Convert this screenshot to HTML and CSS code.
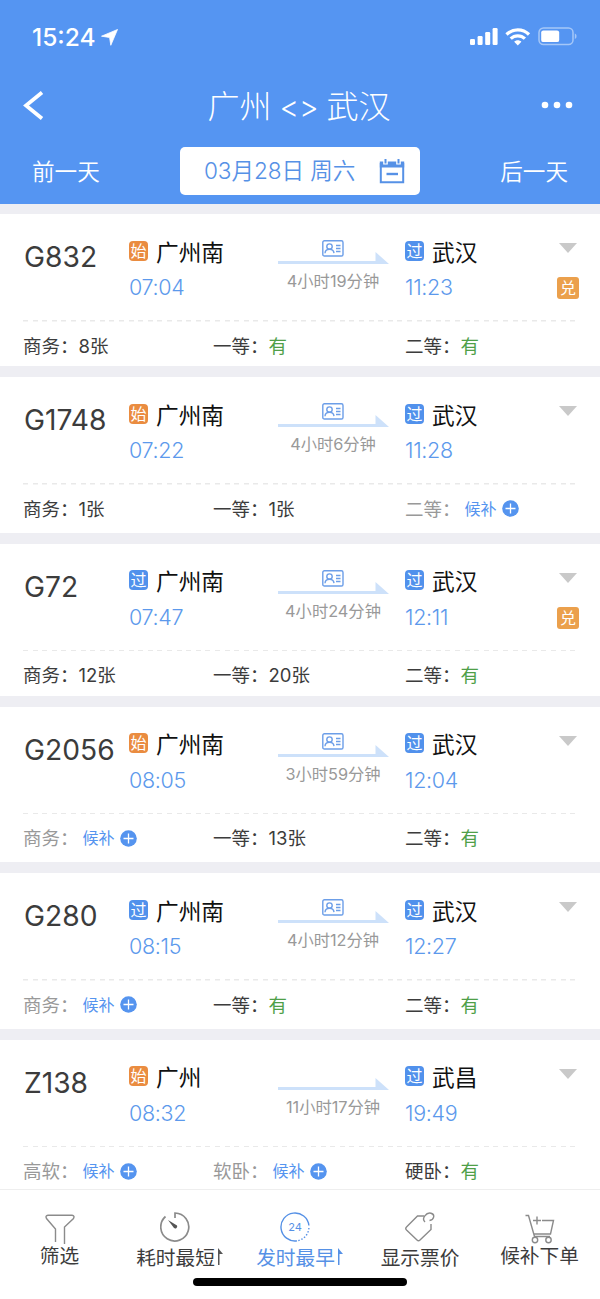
FILE: index.html
```html
<!DOCTYPE html>
<html lang="zh-CN">
<head>
<meta charset="utf-8">
<title>广州 - 武汉</title>
<link rel="stylesheet" href="styles.css">
</head>
<body>
<svg class="defs" width="0" height="0">
  <symbol id="idcard" viewBox="0 0 22 17"><rect x=".8" y=".8" width="20.2" height="15.2" rx="1.6"/><circle cx="7.5" cy="6.6" r="2.7"/><path d="M3 13.2c.2-2.6 2-3.9 4.5-3.9s4.200 1.300 4.500 3.900M14 5.500h4.500M14 8.500h4.500M14 11.500h4.500"/></symbol>
  <symbol id="plus" viewBox="0 0 17 17"><circle cx="8.500" cy="8.500" r="8.300" fill="#5594ef"/><path d="M8.500 3.500v10M3.500 8.500h10" stroke="#fff" stroke-width="1.300"/></symbol>
  <symbol id="track" viewBox="0 0 111 12"><path d="M0 9H97.500V0L111 12H0z" fill="#cde1fa"/></symbol>
  <symbol id="down" viewBox="0 0 18 10"><path d="M0 0h18L9 10z" fill="#c9c9c9"/></symbol>
</svg>
<div class="app">
  <header class="header">
    <div class="status">
      <span class="clock">15:24</span>
      <svg class="locate" width="17" height="17" viewBox="0 0 17 17"><path d="M16.500.500L9.800 16.300 8.600 8.500.500 7.200z" fill="#fff" stroke="#fff" stroke-width=".8" stroke-linejoin="round"/></svg>
      <svg class="signals" width="108" height="20" viewBox="0 0 108 20">
        <g fill="#fff"><rect x="0" y="12" width="5" height="6" rx="1.200"/><rect x="7.600" y="9" width="5" height="9" rx="1.200"/><rect x="15.200" y="5" width="5" height="13" rx="1.200"/><rect x="22.600" y="1" width="5" height="17" rx="1.200"/></g>
        <g fill="none" stroke="#fff" stroke-width="3.200"><path d="M36.500 7.500c6.300-6.200 16.300-6.200 22.500 0"/><path d="M40.700 11.700c4-3.900 10.200-3.900 14.200 0"/></g>
        <path d="M44.200 14.800c2-2 5.200-2 7.200 0l-3.600 3.600z" fill="#fff"/>
        <rect x="69" y="1" width="34" height="16.500" rx="4.500" fill="none" stroke="#a5c7f8" stroke-width="1.500"/>
        <rect x="71.200" y="3.400" width="18" height="11.700" rx="2.200" fill="#fff"/>
        <path d="M104.800 6.500c2.300.7 2.300 4.800 0 5.500z" fill="#a5c7f8"/>
      </svg>
    </div>
    <div class="title-bar">
      <svg width="21" height="29" viewBox="0 0 21 29"><path d="M19 1.500L3 14.500 19 27.500" fill="none" stroke="#fff" stroke-width="3.700"/></svg>
      <h1><span>广州</span><span class="swap">&lt;&gt;</span><span>武汉</span></h1>
      <svg width="32" height="8" viewBox="0 0 32 8" fill="#fff"><circle cx="4" cy="4" r="3.300"/><circle cx="16" cy="4" r="3.300"/><circle cx="28" cy="4" r="3.300"/></svg>
    </div>
    <div class="date-bar">
      <span>前一天</span>
      <div class="date"><span>03月28日 周六</span>
        <svg width="26" height="25" viewBox="0 0 26 25"><path d="M1.800 4v19.200h22.400V4" fill="none" stroke="#5691e6" stroke-width="2"/><path d="M.8 2.500h24.400v6H.8z" fill="#5691e6"/><path d="M6.500 0v5.500M19.500 0v5.500" stroke="#fff" stroke-width="4.600"/><path d="M6.500 0v4.500M19.500 0v4.500" stroke="#5691e6" stroke-width="2"/><path d="M7.500 15h11.500" stroke="#5691e6" stroke-width="2.400"/></svg>
      </div>
      <span>后一天</span>
    </div>
  </header>

  <main class="list">
    <article class="train">
      <div class="trip">
        <div class="number">G832</div>
        <div class="stop"><div class="station"><b class="tag start">始</b>广州南</div><time>07:04</time></div>
        <div class="duration"><svg class="id"><use href="#idcard"/></svg><svg class="track"><use href="#track"/></svg><span>4小时19分钟</span></div>
        <div class="stop"><div class="station"><b class="tag">过</b>武汉</div><time>11:23</time></div>
        <div class="side"><svg class="down"><use href="#down"/></svg><b class="redeem">兑</b></div>
      </div>
      <div class="seats"><div>商务：8张</div><div>一等：<em>有</em></div><div>二等：<em>有</em></div></div>
    </article>
    <article class="train waiting">
      <div class="trip">
        <div class="number">G1748</div>
        <div class="stop"><div class="station"><b class="tag start">始</b>广州南</div><time>07:22</time></div>
        <div class="duration"><svg class="id"><use href="#idcard"/></svg><svg class="track"><use href="#track"/></svg><span>4小时6分钟</span></div>
        <div class="stop"><div class="station"><b class="tag">过</b>武汉</div><time>11:28</time></div>
        <div class="side"><svg class="down"><use href="#down"/></svg></div>
      </div>
      <div class="seats"><div>商务：1张</div><div>一等：1张</div><div class="none">二等：<a>候补<svg><use href="#plus"/></svg></a></div></div>
    </article>
    <article class="train">
      <div class="trip">
        <div class="number">G72</div>
        <div class="stop"><div class="station"><b class="tag">过</b>广州南</div><time>07:47</time></div>
        <div class="duration"><svg class="id"><use href="#idcard"/></svg><svg class="track"><use href="#track"/></svg><span>4小时24分钟</span></div>
        <div class="stop"><div class="station"><b class="tag">过</b>武汉</div><time>12:11</time></div>
        <div class="side"><svg class="down"><use href="#down"/></svg><b class="redeem">兑</b></div>
      </div>
      <div class="seats"><div>商务：12张</div><div>一等：20张</div><div>二等：<em>有</em></div></div>
    </article>
    <article class="train waiting">
      <div class="trip">
        <div class="number">G2056</div>
        <div class="stop"><div class="station"><b class="tag start">始</b>广州南</div><time>08:05</time></div>
        <div class="duration"><svg class="id"><use href="#idcard"/></svg><svg class="track"><use href="#track"/></svg><span>3小时59分钟</span></div>
        <div class="stop"><div class="station"><b class="tag">过</b>武汉</div><time>12:04</time></div>
        <div class="side"><svg class="down"><use href="#down"/></svg></div>
      </div>
      <div class="seats"><div class="none">商务：<a>候补<svg><use href="#plus"/></svg></a></div><div>一等：13张</div><div>二等：<em>有</em></div></div>
    </article>
    <article class="train waiting">
      <div class="trip">
        <div class="number">G280</div>
        <div class="stop"><div class="station"><b class="tag">过</b>广州南</div><time>08:15</time></div>
        <div class="duration"><svg class="id"><use href="#idcard"/></svg><svg class="track"><use href="#track"/></svg><span>4小时12分钟</span></div>
        <div class="stop"><div class="station"><b class="tag">过</b>武汉</div><time>12:27</time></div>
        <div class="side"><svg class="down"><use href="#down"/></svg></div>
      </div>
      <div class="seats"><div class="none">商务：<a>候补<svg><use href="#plus"/></svg></a></div><div>一等：<em>有</em></div><div>二等：<em>有</em></div></div>
    </article>
    <article class="train waiting">
      <div class="trip">
        <div class="number">Z138</div>
        <div class="stop"><div class="station"><b class="tag start">始</b>广州</div><time>08:32</time></div>
        <div class="duration"><svg class="id"></svg><svg class="track"><use href="#track"/></svg><span>11小时17分钟</span></div>
        <div class="stop"><div class="station"><b class="tag">过</b>武昌</div><time>19:49</time></div>
        <div class="side"><svg class="down"><use href="#down"/></svg></div>
      </div>
      <div class="seats"><div class="none">高软：<a>候补<svg><use href="#plus"/></svg></a></div><div class="none">软卧：<a>候补<svg><use href="#plus"/></svg></a></div><div>硬卧：<em>有</em></div></div>
    </article>
  </main>

  <footer class="footer">
    <nav class="tabs">
      <div class="tab high">
        <svg width="30" height="30" viewBox="0 0 30 30"><path d="M10.500 28V15L1.500 4.500Q0 1.500 3 1.200H27Q30 1.500 28.500 4.500L19.500 13V30"/></svg>
        <span>筛选</span>
      </div>
      <div class="tab sorted">
        <svg width="30" height="30" viewBox="0 0 30 30"><path d="M15 6V1A14 14 0 1 1 5.500 4.500" stroke-width="1.700"/><path d="M8 8l9 5.500a2 2 0 0 1-3 2.500z" fill="#555" stroke="none"/></svg>
        <span>耗时最短<svg class="arrow" width="6" height="18" viewBox="0 0 6 18"><path d="M1 18V1l5 6H2.500v11z"/></svg></span>
      </div>
      <div class="tab sorted active">
        <svg width="30" height="30" viewBox="0 0 30 30"><path d="M17 28.850A14 14 0 1 1 28.900 13.500"/><path d="M28.900 16A14 14 0 0 1 17 28.850" stroke-dasharray="1.500 1.700"/><text x="15" y="19" text-anchor="middle">24</text></svg>
        <span>发时最早<svg class="arrow" width="6" height="18" viewBox="0 0 6 18"><path d="M1 18V1l5 6H2.500v11z"/></svg></span>
      </div>
      <div class="tab">
        <svg width="30" height="30" viewBox="0 0 30 30"><path d="M19 4H12.500L1.500 15Q0 16.500 1.500 18L12 28Q13.500 29.500 15 28L26 17.500V12"/><path d="M20 10C16 6.500 21.500 0 26 1.200C30.500 2.500 29 8 24.500 8.500"/></svg>
        <span>显示票价</span>
      </div>
      <div class="tab high">
        <svg width="30" height="30" viewBox="0 0 30 30"><path d="M.5 1.500H3.500L9.500 22.500H25M9 20H25.500L28.500 6.500H17M12 2.500v8M8 6.500h8"/><circle cx="10" cy="26" r="2.700"/><circle cx="23.500" cy="26" r="2.700"/></svg>
        <span>候补下单</span>
      </div>
    </nav>
    <div class="home"></div>
  </footer>
</div>
</body>
</html>
```
FILE: styles.css
```css
* { box-sizing: border-box; }
body { margin: 0; font-family: Inter, "Noto Sans CJK SC", sans-serif; color: #3c3c3c; }
svg { display: block; flex: none; }
.defs { position: absolute; }
.app { width: 600px; height: 1299px; display: flex; flex-direction: column; overflow: hidden; background: #eeeef3; }

.header { height: 203.500px; flex: none; background: #5595f2; color: #fff; }
.status { height: 74px; padding: 0 22px 0 32px; display: flex; align-items: center; }
.clock { font-size: 24.500px; font-weight: 500; width: 64px; letter-spacing: 0; }
.locate { margin-left: 5px; }
.signals { margin-left: auto; }
.title-bar { height: 62px; padding: 0 27px 0 23px; display: flex; align-items: center; justify-content: space-between; }
.title-bar h1 { margin: 0 0 0 13px; padding-top: 3px; font-size: 32px; font-weight: 300; line-height: 46px; display: flex; align-items: center; gap: 8px; }
.swap { font-size: 30px; line-height: 30px; font-weight: 300; }
.date-bar { height: 68px; padding: 11px 32px 0 32px; display: flex; justify-content: space-between; align-items: flex-start; font-size: 22.600px; font-weight: 350; line-height: 50px; }
.date { width: 240px; height: 48px; border-radius: 5px; background: #fff; color: #5691e6; padding: 0 15px 0 24px; display: flex; align-items: center; justify-content: space-between; white-space: nowrap; letter-spacing: -.1px; }

.list { flex: 1; min-height: 0; overflow: hidden; padding-top: 10.500px; display: flex; flex-direction: column; gap: 11.100px; }
.train { height: 152.200px; flex: none; background: #fff; padding: 0 23px; }
.waiting { height: 155.300px; }
.trip { height: 107.500px; display: grid; grid-template-columns: 106px 148px 128px 1fr 24px; background: repeating-linear-gradient(90deg, #e9e9e9 0 5px, transparent 5px 9.600px) bottom / 100% 1.500px no-repeat; }
.number { padding: 24px 0 0 1px; font-size: 28.200px; line-height: 38px; white-space: nowrap; }
.stop { padding-top: 21px; }
.station { display: flex; align-items: center; height: 32px; font-size: 22.700px; color: #111; }
.tag { width: 19px; height: 20px; margin: 0 8px 1px 0; border-radius: 4px; background: #5191ec; color: #fff; font-size: 16px; font-weight: 400; line-height: 20px; text-align: center; }
.start { background: #ea8c40; }
time { display: block; font-size: 21.500px; letter-spacing: -.3px; line-height: 30px; margin-top: 5px; color: #5c99ec; font-weight: 350; }
.duration { width: 112px; padding-top: 26px; display: flex; flex-direction: column; align-items: center; font-size: 16.300px; line-height: 24px; color: #999; white-space: nowrap; }
.duration span { margin-top: 5px; }
.id { width: 22px; height: 17px; fill: none; stroke: #6c9ee8; stroke-width: 1.400; }
.track { width: 111px; height: 12px; margin-top: -5px; }
.side { padding-top: 29px; display: flex; flex-direction: column; align-items: center; }
.down { width: 18px; height: 10px; margin-left: 6px; }
.redeem { width: 22px; height: 22px; margin: 24px 0 0 6px; background: #eba04c; color: #fff; border-radius: 3px; font-size: 16px; font-weight: 400; line-height: 22px; text-align: center; }
.seats { display: grid; grid-template-columns: 190px 192px 1fr; font-size: 18.500px; line-height: 28px; padding-top: 10px; }
.seats > div { display: flex; white-space: nowrap; }
.seats em { font-style: normal; color: #4f9f48; }
.none { color: #999; }
.seats a { display: flex; align-items: center; margin-left: 4px; gap: 5px; font-size: 16px; color: #5594ef; }
.seats a svg { width: 17px; height: 17px; }

.footer { height: 110px; flex: none; background: #fff; border-top: 1.500px solid #eee; padding-top: 22px; }
.tabs { display: grid; grid-template-columns: repeat(5, 120px); height: 66px; font-size: 19.700px; }
.tab { display: flex; flex-direction: column; align-items: center; }
.tab > svg { fill: none; stroke: #8b8b8b; stroke-width: 1.400; }
.tab > span { display: flex; align-items: center; line-height: 28px; margin-top: 2px; }
.high > svg { margin-top: 2px; }
.high > span { margin: -2px 1px 0 0; }
.sorted { padding-right: 10px; }
.sorted > span { margin-right: -9px; }
.arrow { fill: #555; margin: -4px 0 0 2px; }
.active { color: #5691e6; }
.active > svg { stroke: #5691e6; }
.active text { font-size: 11px; fill: #5691e6; stroke: none; }
.active .arrow { fill: #5691e6; }
.home { width: 214px; height: 8px; border-radius: 4px; background: #000; margin: 0 auto; }
```
